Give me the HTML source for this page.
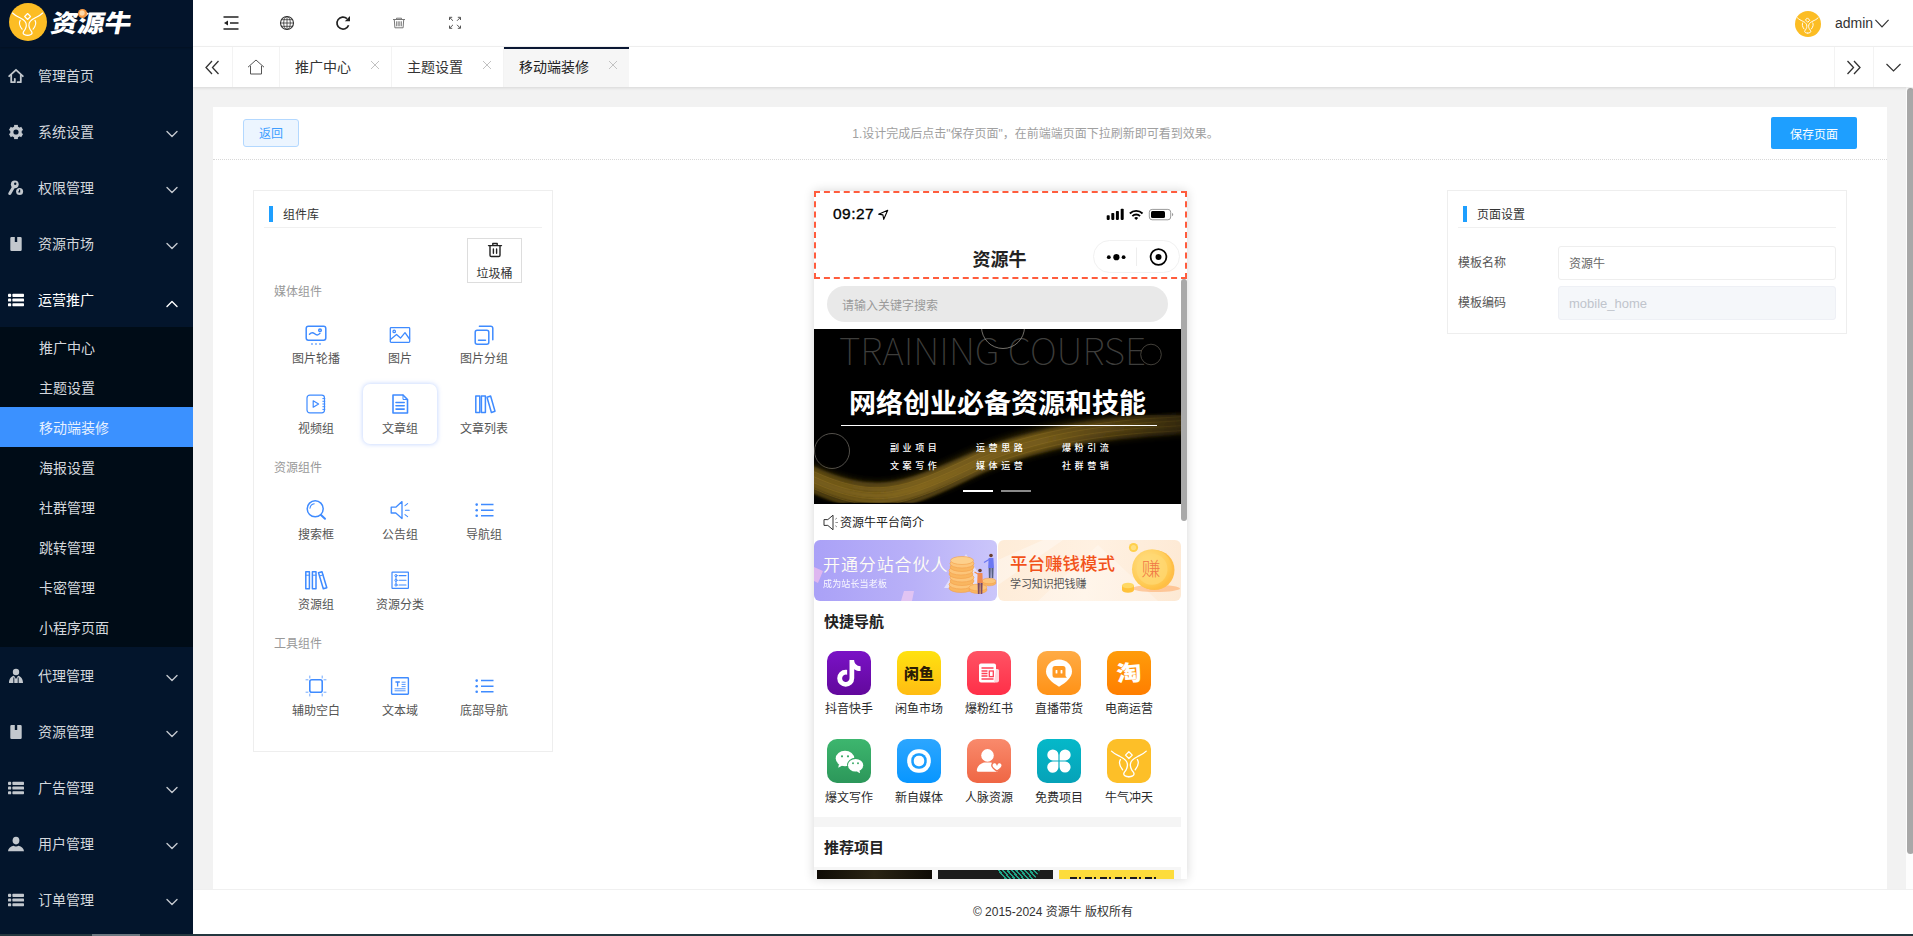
<!DOCTYPE html>
<html lang="zh-CN">
<head>
<meta charset="utf-8">
<title>资源牛 - 移动端装修</title>
<style>
*{box-sizing:border-box;margin:0;padding:0}
html,body{width:1913px;height:936px;overflow:hidden;background:#fff}
body{font-family:"Liberation Sans","Noto Sans CJK SC",sans-serif;font-size:14px;color:#333;position:relative}
.abs{position:absolute}
svg{display:block}
/* ---------- sidebar ---------- */
#side{position:absolute;left:0;top:0;width:193px;height:934px;background:#03152c;overflow:hidden}
#logo{position:absolute;left:0;top:0;width:193px;height:47px;background:#03142b;box-shadow:0 1px 2px rgba(0,0,0,.25)}
#logo .circ{position:absolute;left:9px;top:3px;width:38px;height:38px;border-radius:50%;background:#fcbd24}
#logo .name{position:absolute;left:50px;top:6px;font-size:24.500px;line-height:36px;font-weight:900;color:#fff;letter-spacing:0;white-space:nowrap;transform:skewX(-11deg) scaleX(1.090);transform-origin:0 70%;font-family:"Liberation Sans","Noto Sans CJK SC",sans-serif}
#logo .coin{position:absolute;left:78px;top:9px;width:9px;height:9px;border-radius:50%;background:radial-gradient(circle at 45% 45%,#ffd9a8 0 30%,#f79a45 45%)}
.mi{position:absolute;left:0;width:193px;height:56px;color:#d4d8dd;font-size:14px;line-height:56px}
.mi .t{position:absolute;left:38px;top:1px;white-space:nowrap}
.mi .ic{position:absolute;left:8px;top:21px;width:16px;height:16px}
.mi .ar{position:absolute;left:166px;top:27px;width:12px;height:8px}
.mi.open{color:#fff}
#sub{position:absolute;left:0;top:327px;width:193px;height:320px;background:#000c17}
.si{position:absolute;left:0;width:193px;height:40px;line-height:40px;color:#d4d8dd;font-size:14px}
.si span{position:absolute;left:39px;top:1px;white-space:nowrap}
.si.on{background:#3b91ff;color:#e6f0ff}
/* ---------- header ---------- */
#hdr{position:absolute;left:193px;top:0;width:1720px;height:47px;background:#fff;border-bottom:1px solid #f3f3f3}
#hdr .hi{position:absolute;top:14px;width:18px;height:18px}
#tabs{position:absolute;left:193px;top:47px;width:1720px;height:40px;background:#fff;box-shadow:0 1px 3px rgba(0,0,0,.12);z-index:5}
#tabs .dv{position:absolute;top:0;width:1px;height:40px;background:#f3f3f3}
#tabs .tb{position:absolute;top:0;height:40px;line-height:40px;font-size:14px;color:#333;white-space:nowrap}
#tabs .x{position:absolute;top:13px;width:10px;height:10px}
#tabs .act{position:absolute;left:311px;top:0;width:125px;height:40px;background:#f6f6f6;border-top:2px solid #0a1733}
/* ---------- body ---------- */
#main{position:absolute;left:193px;top:87px;width:1713px;height:802px;background:#f2f2f2}
#card{position:absolute;left:20px;top:21px;width:1674px;height:781px;background:#fff}
#card::before{content:"";position:absolute;left:0;top:-1px;width:100%;height:1px;background:#fff}
#vsb{position:absolute;left:1906px;top:87px;width:7px;height:802px;background:#fdfdfd}
#vsb i{position:absolute;left:1px;top:1px;width:7px;height:766px;border-radius:4px;background:#a8a8a8}
#foot{position:absolute;left:193px;top:889px;width:1720px;height:45px;background:#fff;border-top:1px solid #f0f0f0;text-align:center;font-size:12px;line-height:44px;color:#333}
#bstrip{position:absolute;left:0;top:934px;width:1913px;height:2px;background:#24373f}
#bstrip i{position:absolute;left:92px;top:0;width:48px;height:2px;background:#6b7780}

/* ---------- toolbar + panels (coords relative to #card: page x-213, y-108) ---------- */
#back{position:absolute;left:30px;top:11px;width:56px;height:28px;border:1px solid #b3d8ff;background:#ecf5ff;border-radius:3px;color:#409eff;font-size:12px;line-height:29px;text-align:center}
#tip{position:absolute;left:2.500px;top:16.700px;width:1640px;text-align:center;font-size:12px;line-height:18px;color:#a0a0a0}
#save{position:absolute;left:1558px;top:9px;width:86px;height:32px;background:#1e9fff;border-radius:2px;color:#fff;font-size:12px;line-height:36px;text-align:center}
#dot{position:absolute;left:0;top:51px;width:1674px;height:0;border-top:1px dotted #d8d8d8}
.pnl{position:absolute;border:1px solid #eee;background:#fff}
.pnl .hd{position:absolute;left:10px;top:10px;right:10px;height:27px;border-bottom:1px solid #f0f0f0}
.pnl .hd i{position:absolute;left:5px;top:5px;width:4px;height:16px;background:#1e9fff}
.pnl .hd span{position:absolute;left:19px;top:5px;font-size:12px;line-height:18px;color:#333}
.grp{position:absolute;left:20px;margin-top:.2px;font-size:12px;line-height:16px;color:#999}
.ci{position:absolute;width:76px;height:62px;text-align:center}
.ci svg{position:absolute;left:26px;top:10px;width:24px;height:24px}
.ci span{position:absolute;left:-10px;width:96px;top:39px;font-size:12px;line-height:16px;color:#555;white-space:nowrap}
.ci.sel::before{content:"";position:absolute;left:1px;top:2px;width:74px;height:60px;border-radius:7px;box-shadow:0 0 5px rgba(90,140,255,.42);background:#fff}
#trash{position:absolute;left:213px;top:47px;width:55px;height:45px;border:1px solid #ddd;text-align:center}
#trash span{position:absolute;left:0;width:53px;top:27px;font-size:12px;line-height:16px;color:#333}
.frm{position:absolute;left:10px;margin-top:.4px;font-size:12px;line-height:18px;color:#555}
.inp{position:absolute;left:110px;width:278px;height:34px;border:1px solid #eee;border-radius:3px;font-size:12px;line-height:32px;padding-left:10px;color:#666}

/* ---------- phone (origin page 814,191) ---------- */
#phone{position:absolute;left:601px;top:83px;width:373px;height:688px;background:#fff;box-shadow:0 0 10px rgba(0,0,0,.16);overflow:hidden}
#phead{position:absolute;left:0;top:0;width:373px;height:88px;border:2px dashed #ff5c3d;background:#fff}
#ptime{position:absolute;left:17px;top:11.300px;font-size:15.500px;line-height:20px;color:#000;font-weight:400;-webkit-text-stroke:.35px #000;letter-spacing:.45px}
#ptitle{position:absolute;left:-1px;top:52.500px;width:369px;text-align:center;font-size:18px;line-height:28px;font-weight:700;color:#222}
#caps{position:absolute;left:277px;top:46.500px;width:87px;height:33px;border:1px solid #f1f1f1;border-radius:17px}
#psb{position:absolute;left:367px;top:88px;width:6px;height:600px;background:#fff}
#psb i{position:absolute;left:0;top:0;width:6px;height:242px;border-radius:3px;background:#a9a9a9}
#psearch{position:absolute;left:13px;top:95px;width:341px;height:36px;border-radius:18px;background:#e9e9e9;font-size:12px;line-height:40px;color:#9a9a9a;padding-left:15px}
#pban{position:absolute;left:0;top:138px;width:367px;height:175px;background:#000;overflow:hidden}
#pban .tt{position:absolute;left:0;top:58px;width:367px;text-align:center;font-size:27px;line-height:34px;font-weight:700;color:#fff;white-space:nowrap;letter-spacing:0}
#pban .ln{position:absolute;left:27px;top:96px;width:316px;height:1px;background:#fff}
#pban .sm{position:absolute;font-size:9px;line-height:12px;color:#fff;letter-spacing:3.600px;white-space:nowrap;font-weight:500}
#pban .ind{position:absolute;top:161px;width:30px;height:2px}
#pnote{position:absolute;left:26px;top:322.500px;font-size:12px;line-height:18px;color:#222;white-space:nowrap}
.pb{position:absolute;top:349px;height:61px;border-radius:6px;overflow:hidden}
#pb1{left:0;width:183px;background:linear-gradient(90deg,#aaa1f7 0%,#b9b1f8 55%,#cbc6fa 100%)}
#pb2{left:184px;width:183px;background:linear-gradient(100deg,#feecd8 0%,#fff1e2 50%,#fde9d4 100%)}
.ph{position:absolute;left:10px;font-size:15px;line-height:20px;font-weight:700;color:#222;white-space:nowrap}
.ni{position:absolute;width:44px;height:44px;border-radius:10px;overflow:hidden}
.ni svg{position:absolute;left:0;top:0;width:44px;height:44px}
.nl{position:absolute;width:70px;text-align:center;font-size:12px;line-height:16px;color:#2a2a2a;white-space:nowrap}
#psep{position:absolute;left:0;top:626px;width:367px;height:10px;background:#f5f5f5}
#pth{position:absolute;left:0;top:676px;width:367px;height:12px;background:#f6f6f6;overflow:hidden}
#pth i{position:absolute;top:3px;height:9px;width:115px;overflow:hidden}
#pth b{position:absolute;display:block}
</style>
</head>
<body>

<!-- ================= SIDEBAR ================= -->
<div id="side">
  <div id="logo">
    <div class="circ">
      <svg width="38" height="38" viewBox="0 0 38 38" fill="none" stroke="#fff" stroke-width="1.150" stroke-linecap="round" stroke-linejoin="round"><path d="M3.500 10C6 12.500 8.500 13.500 10.900 14.700S14.500 16.500 15.800 18.100C17 19.500 17.500 21 17.300 22.600C17.100 24.500 16.800 25 16.300 26C15.800 27.200 14.900 27.900 14.400 28.900C13.800 30.200 14.300 31 15.300 31.500C16.300 32.100 17.500 32.300 18.600 32.300"/><path d="M33.700 10C31.200 12.500 28.700 13.500 26.300 14.700S22.700 16.500 21.400 18.100C20.200 19.500 19.700 21 19.900 22.600C20.100 24.500 20.400 25 20.900 26C21.400 27.200 22.300 27.900 22.800 28.900C23.400 30.200 22.900 31 21.900 31.500C20.900 32.100 19.700 32.300 18.600 32.300"/><path d="M11.200 17.400C10.200 19 10.200 22.500 13.100 26.200"/><path d="M26 17.400C27 19 27 22.500 24.100 26.200"/><path d="M18.600 10.500l2.950 3-2.950 3-2.950-3z"/></svg>
    </div>
    <div class="name">资源牛</div><div class="coin"></div>
  </div>
  <div class="mi" style="top:47px"><svg class="ic" viewBox="0 0 16 16" fill="none" stroke="#c3c8ce" stroke-width="1.800" stroke-linejoin="round" stroke-linecap="round"><path d="M1.200 8.200L8 1.800l6.800 6.400"/><path d="M3.200 7v7.200h3.600v-3.400M12.800 7v7.200H9.600"/></svg><span class="t">管理首页</span></div>
  <div class="mi" style="top:103px"><svg class="ic" viewBox="0 0 16 16" fill="none" stroke="#c3c8ce"><circle cx="8" cy="8" r="4.200" stroke-width="3.200"/><g stroke-width="3.800" stroke-linecap="butt"><path d="M8 .9v2.400" transform="rotate(0 8 8)"/><path d="M8 .9v2.400" transform="rotate(60 8 8)"/><path d="M8 .9v2.400" transform="rotate(120 8 8)"/><path d="M8 .9v2.400" transform="rotate(180 8 8)"/><path d="M8 .9v2.400" transform="rotate(240 8 8)"/><path d="M8 .9v2.400" transform="rotate(300 8 8)"/></g></svg><span class="t">系统设置</span><svg class="ar" viewBox="0 0 12 8" fill="none" stroke="#c3c8ce" stroke-width="1.4" stroke-linecap="round" stroke-linejoin="round"><path d="M1 1.500l5 5 5-5"/></svg></div>
  <div class="mi" style="top:159px"><svg class="ic" viewBox="0 0 16 16"><path d="M5.800 6.500L1.800 13.500" stroke="#c3c8ce" stroke-width="3" stroke-linecap="round"/><circle cx="6.800" cy="4.300" r="3.900" fill="#c3c8ce"/><circle cx="7.200" cy="3.700" r="1.200" fill="#03152c"/><circle cx="11.600" cy="11.600" r="4.400" fill="#03152c"/><circle cx="11.600" cy="11.600" r="3.500" fill="#c3c8ce"/><path d="M11.600 9.400v2.400h-1.300" stroke="#03152c" stroke-width="1.200" fill="none"/></svg><span class="t">权限管理</span><svg class="ar" viewBox="0 0 12 8" fill="none" stroke="#c3c8ce" stroke-width="1.4" stroke-linecap="round" stroke-linejoin="round"><path d="M1 1.500l5 5 5-5"/></svg></div>
  <div class="mi" style="top:215px"><svg class="ic" viewBox="0 0 16 16"><path fill="#c3c8ce" d="M3.500 1h3.300v5h2.400V1h3.300a1.200 1.200 0 0 1 1.200 1.200v11.600a1.200 1.200 0 0 1-1.200 1.200h-9a1.200 1.200 0 0 1-1.200-1.200V2.200A1.200 1.200 0 0 1 3.500 1z"/></svg><span class="t">资源市场</span><svg class="ar" viewBox="0 0 12 8" fill="none" stroke="#c3c8ce" stroke-width="1.4" stroke-linecap="round" stroke-linejoin="round"><path d="M1 1.500l5 5 5-5"/></svg></div>
  <div class="mi open" style="top:271px"><svg class="ic" viewBox="0 0 16 16" fill="#fff"><rect x="0" y="1.800" width="3.200" height="3.100" rx=".9"/><rect x="0" y="6.500" width="3.200" height="3.100" rx=".9"/><rect x="0" y="11.200" width="3.200" height="3.100" rx=".9"/><rect x="4.400" y="1.800" width="11.600" height="3.100" rx=".7"/><rect x="4.400" y="6.500" width="11.600" height="3.100" rx=".7"/><rect x="4.400" y="11.200" width="11.600" height="3.100" rx=".7"/></svg><span class="t">运营推广</span><svg class="ar" style="margin-top:2px" viewBox="0 0 12 8" fill="none" stroke="#fff" stroke-width="1.400" stroke-linecap="round" stroke-linejoin="round"><path d="M1 6.500l5-5 5 5"/></svg></div>
  <div class="mi" style="top:647px"><svg class="ic" viewBox="0 0 16 16" fill="#c3c8ce"><circle cx="8" cy="4" r="3.200"/><path d="M1 15c0-4 2.200-6.800 5-7.300L8 11l2-3.300c2.800.5 5 3.300 5 7.300z"/><path d="M5.800 9.500v5.500M10.200 9.500v5.500" stroke="#03152c" stroke-width=".9"/></svg><span class="t">代理管理</span><svg class="ar" viewBox="0 0 12 8" fill="none" stroke="#c3c8ce" stroke-width="1.4" stroke-linecap="round" stroke-linejoin="round"><path d="M1 1.500l5 5 5-5"/></svg></div>
  <div class="mi" style="top:703px"><svg class="ic" viewBox="0 0 16 16"><path fill="#c3c8ce" d="M3.500 1h3.300v5h2.400V1h3.300a1.200 1.200 0 0 1 1.200 1.200v11.600a1.200 1.200 0 0 1-1.200 1.200h-9a1.200 1.200 0 0 1-1.200-1.200V2.200A1.200 1.200 0 0 1 3.500 1z"/></svg><span class="t">资源管理</span><svg class="ar" viewBox="0 0 12 8" fill="none" stroke="#c3c8ce" stroke-width="1.4" stroke-linecap="round" stroke-linejoin="round"><path d="M1 1.500l5 5 5-5"/></svg></div>
  <div class="mi" style="top:759px"><svg class="ic" viewBox="0 0 16 16" fill="#c3c8ce"><rect x="0" y="1.800" width="3.200" height="3.100" rx=".9"/><rect x="0" y="6.500" width="3.200" height="3.100" rx=".9"/><rect x="0" y="11.200" width="3.200" height="3.100" rx=".9"/><rect x="4.400" y="1.800" width="11.600" height="3.100" rx=".7"/><rect x="4.400" y="6.500" width="11.600" height="3.100" rx=".7"/><rect x="4.400" y="11.200" width="11.600" height="3.100" rx=".7"/></svg><span class="t">广告管理</span><svg class="ar" viewBox="0 0 12 8" fill="none" stroke="#c3c8ce" stroke-width="1.4" stroke-linecap="round" stroke-linejoin="round"><path d="M1 1.500l5 5 5-5"/></svg></div>
  <div class="mi" style="top:815px"><svg class="ic" viewBox="0 0 16 16" fill="#c3c8ce"><ellipse cx="8" cy="4.600" rx="3.400" ry="3.800"/><path d="M0 15.200c.2-3 2.400-4.600 5.400-5.400 1.600 1 3.600 1 5.200 0 3 .8 5.200 2.400 5.400 5.400z"/></svg><span class="t">用户管理</span><svg class="ar" viewBox="0 0 12 8" fill="none" stroke="#c3c8ce" stroke-width="1.4" stroke-linecap="round" stroke-linejoin="round"><path d="M1 1.500l5 5 5-5"/></svg></div>
  <div class="mi" style="top:871px"><svg class="ic" viewBox="0 0 16 16" fill="#c3c8ce"><rect x="0" y="1.800" width="3.200" height="3.100" rx=".9"/><rect x="0" y="6.500" width="3.200" height="3.100" rx=".9"/><rect x="0" y="11.200" width="3.200" height="3.100" rx=".9"/><rect x="4.400" y="1.800" width="11.600" height="3.100" rx=".7"/><rect x="4.400" y="6.500" width="11.600" height="3.100" rx=".7"/><rect x="4.400" y="11.200" width="11.600" height="3.100" rx=".7"/></svg><span class="t">订单管理</span><svg class="ar" viewBox="0 0 12 8" fill="none" stroke="#c3c8ce" stroke-width="1.4" stroke-linecap="round" stroke-linejoin="round"><path d="M1 1.500l5 5 5-5"/></svg></div>
  <div id="sub">
    <div class="si" style="top:0px"><span>推广中心</span></div>
    <div class="si" style="top:40px"><span>主题设置</span></div>
    <div class="si on" style="top:80px"><span>移动端装修</span></div>
    <div class="si" style="top:120px"><span>海报设置</span></div>
    <div class="si" style="top:160px"><span>社群管理</span></div>
    <div class="si" style="top:200px"><span>跳转管理</span></div>
    <div class="si" style="top:240px"><span>卡密管理</span></div>
    <div class="si" style="top:280px"><span>小程序页面</span></div>
  </div>
</div>

<!-- ================= HEADER ================= -->
<div id="hdr">
  <svg class="hi" style="left:29px" viewBox="0 0 18 18" fill="none" stroke="#222" stroke-width="1.500"><path d="M1.500 3h15M8 9h8.500M1.500 15h15"/><path d="M2 9l4-2.600v5.200z" fill="#222" stroke="none"/></svg>
  <svg class="hi" style="left:85px" viewBox="0 0 18 18" fill="none" stroke="#333" stroke-width=".9"><circle cx="9" cy="9" r="6.500" stroke-width="1.100"/><ellipse cx="9" cy="9" rx="3.300" ry="6.500" stroke-width=".8"/><path d="M9 2.500v13M2.500 9h13M3.500 5.700h11M3.500 12.300h11" stroke-width=".8"/></svg>
  <svg class="hi" style="left:141px" viewBox="0 0 18 18" fill="none" stroke="#222" stroke-width="1.700"><path d="M14.600 11.200A6 6 0 1 1 13 4.600"/><path d="M16 2v5.200h-5.200z" fill="#222" stroke="none"/></svg>
  <svg class="hi" style="left:197px" viewBox="0 0 18 18" fill="none" stroke="#777" stroke-width="1"><path d="M3 5.500h12M6.500 5.200V4.200h5v1M4.300 5.800l.6 8h8.200l.6-8"/><path d="M6.600 7.300v5M8.200 7.300v5M9.800 7.300v5M11.400 7.300v5" stroke-width=".9"/></svg>
  <svg class="hi" style="left:253px" viewBox="0 0 18 18" fill="none" stroke="#555" stroke-width="1"><path d="M3.700 3.500l3.300 3.300M14.300 3.500l-3.300 3.300M3.700 14.100l3.300-3.300M14.300 14.100l-3.300-3.300"/><path d="M3.500 6V3.300h2.700M11.800 3.300h2.700V6M3.500 11.600v2.700h2.700M14.500 11.600v2.700h-2.700"/></svg>
  <div class="abs" style="left:1602px;top:11px;width:26px;height:26px;border-radius:50%;background:#fcbd24">
    <svg width="26" height="26" viewBox="0 0 38 38" fill="none" stroke="#fff" stroke-width="1.400" stroke-linecap="round" stroke-linejoin="round"><path d="M3.500 10C6 12.500 8.500 13.500 10.900 14.700S14.500 16.500 15.800 18.100C17 19.500 17.500 21 17.300 22.600C17.100 24.500 16.800 25 16.300 26C15.800 27.200 14.900 27.900 14.400 28.900C13.800 30.200 14.300 31 15.300 31.500C16.300 32.100 17.500 32.300 18.600 32.300"/><path d="M33.700 10C31.200 12.500 28.700 13.500 26.300 14.700S22.700 16.500 21.400 18.100C20.200 19.500 19.700 21 19.900 22.600C20.100 24.500 20.400 25 20.900 26C21.400 27.200 22.300 27.900 22.800 28.900C23.400 30.200 22.900 31 21.900 31.500C20.900 32.100 19.700 32.300 18.600 32.300"/><path d="M11.200 17.400C10.200 19 10.200 22.500 13.100 26.200"/><path d="M26 17.400C27 19 27 22.500 24.100 26.200"/><path d="M18.600 10.500l2.950 3-2.950 3-2.950-3z"/></svg>
  </div>
  <div class="abs" style="left:1642px;top:12.800px;font-size:14px;line-height:20px;color:#333">admin</div>
  <svg class="abs" style="left:1682px;top:18.500px" width="14" height="9" viewBox="0 0 14 9" fill="none" stroke="#333" stroke-width="1.200"><path d="M.4 .8l6.600 7L13.600 .8"/></svg>
</div>
<div id="tabs">
  <div class="act"></div>
  <svg class="abs" style="left:12px;top:13px" width="15" height="15" viewBox="0 0 15 15" fill="none" stroke="#333" stroke-width="1.300"><path d="M7 1L1 7.500 7 14M13.500 1l-6 6.500 6 6.500"/></svg>
  <div class="dv" style="left:39px"></div>
  <svg class="abs" style="left:54px;top:12px" width="18" height="16" viewBox="0 0 18 16" fill="none" stroke="#555" stroke-width="1"><path d="M1 8.200L9 1l8 7.200"/><path d="M3.500 6.800V15h11V6.800"/></svg>
  <div class="dv" style="left:86px"></div>
  <div class="tb" style="left:102px">推广中心</div><svg class="x" style="left:177px" viewBox="0 0 10 10" fill="none" stroke="#c2c2c2" stroke-width="1"><path d="M1 1l8 8M9 1l-8 8"/></svg>
  <div class="dv" style="left:198px"></div>
  <div class="tb" style="left:214px">主题设置</div><svg class="x" style="left:289px" viewBox="0 0 10 10" fill="none" stroke="#c2c2c2" stroke-width="1"><path d="M1 1l8 8M9 1l-8 8"/></svg>
  <div class="dv" style="left:310px"></div>
  <div class="tb" style="left:326px;color:#222">移动端装修</div><svg class="x" style="left:415px" viewBox="0 0 10 10" fill="none" stroke="#c2c2c2" stroke-width="1"><path d="M1 1l8 8M9 1l-8 8"/></svg>
  <div class="dv" style="left:1641px"></div>
  <svg class="abs" style="left:1653px;top:13px" width="15" height="15" viewBox="0 0 15 15" fill="none" stroke="#333" stroke-width="1.300"><path d="M1.500 1l6 6.500-6 6.500M8 1l6 6.500L8 14"/></svg>
  <div class="dv" style="left:1680px"></div>
  <svg class="abs" style="left:1693px;top:16px" width="15" height="9" viewBox="0 0 15 9" fill="none" stroke="#333" stroke-width="1.200"><path d="M.5 1l7 7 7-7"/></svg>
</div>

<!-- ================= MAIN ================= -->
<div id="main"><div id="card">
  <div id="back">返回</div>
  <div id="tip">1.设计完成后点击"保存页面"，在前端端页面下拉刷新即可看到效果。</div>
  <div id="save">保存页面</div>
  <div id="dot"></div>
  <!-- left: component library -->
  <div class="pnl" style="left:40px;top:82px;width:300px;height:562px">
    <div class="hd"><i></i><span>组件库</span></div>
    <div id="trash"><svg class="abs" style="left:17.500px;top:1.800px" width="18" height="18" viewBox="0 0 18 18" fill="none" stroke="#222" stroke-width="1.400" stroke-linecap="round" stroke-linejoin="round"><path d="M2.500 4.600h13M6.800 4.400V2.500h4.400v1.900M4 4.800v9.400a1.300 1.300 0 0 0 1.300 1.300h7.400a1.300 1.300 0 0 0 1.300-1.300V4.800M7.400 8v4.200M10.600 8v4.200"/></svg><span>垃圾桶</span></div>
    <div class="grp" style="top:93px">媒体组件</div>
    <div class="grp" style="top:269px">资源组件</div>
    <div class="grp" style="top:445px">工具组件</div>
    <div class="ci" style="left:24px;top:121px"><svg style="margin-top:.5px" viewBox="0 0 24 24" fill="none" stroke="#3f8bff" stroke-width="1.5" stroke-linecap="round" stroke-linejoin="round"><rect x="2.200" y="3.200" width="19.600" height="14" rx="2.200"/><path d="M5.500 11.200c2-2.200 3.800-1.600 5.200-.4 1.600 1.400 3.400 1.800 5.200-.4"/><circle cx="16" cy="7.200" r="1.300"/><path d="M7.300 21h1.400M11.300 21h1.400M15.300 21h1.400" stroke-width="1.500" stroke-linecap="butt"/></svg><span>图片轮播</span></div>
    <div class="ci" style="left:108px;top:121px"><svg style="margin-top:.5px" viewBox="0 0 24 24" fill="none" stroke="#3f8bff" stroke-width="1.3" stroke-linecap="round" stroke-linejoin="round"><rect x="2.300" y="4.700" width="19.400" height="14.600" rx=".8"/><circle cx="6.200" cy="8.400" r="1.200"/><path d="M2.500 16.500l6-5 4 3.600 4.500-5.400 4.500 6.300"/></svg><span>图片</span></div>
    <div class="ci" style="left:192px;top:121px"><svg style="margin-top:.5px" viewBox="0 0 24 24" fill="none" stroke="#3f8bff" stroke-width="1.5" stroke-linecap="round" stroke-linejoin="round"><rect x="3.200" y="7.200" width="13.600" height="14" rx="2"/><path d="M7.400 3.200h11.400a2 2 0 0 1 2 2v11.600"/><path d="M6.500 17.200h7"/></svg><span>图片分组</span></div>
    <div class="ci" style="left:24px;top:191px"><svg viewBox="0 0 24 24" fill="none" stroke="#3f8bff" stroke-width="1.2" stroke-linecap="round" stroke-linejoin="round"><rect x="3" y="3.200" width="17.500" height="17.600" rx="2.800"/><path d="M9.200 8.800v6.400l5.400-3.200z"/><path d="M18.800 6.600h2M18.800 9.300h2M18.800 12h2M18.800 14.700h2M18.800 17.400h2" stroke-width="1"/></svg><span>视频组</span></div>
    <div class="ci sel" style="left:108px;top:191px"><svg viewBox="0 0 24 24" fill="none" stroke="#3f8bff" stroke-width="1.6" stroke-linecap="round" stroke-linejoin="round"><path d="M5 3h10l4.500 4.500V21H5z"/><path d="M15 3v4.500h4.500" stroke-width="1"/><path d="M8 10.500h8.200M8 13.800h8.200M8 17.100h8.200"/></svg><span>文章组</span></div>
    <div class="ci" style="left:192px;top:191px"><svg viewBox="0 0 24 24" fill="none" stroke="#3f8bff" stroke-width="1.500" stroke-linecap="round" stroke-linejoin="round"><rect x="3.800" y="4" width="4" height="16.500"/><rect x="9.400" y="4" width="4" height="16.500"/><path d="M15 5.200l3.600-1.200 4.400 15.300-3.600 1.200z"/></svg><span>文章列表</span></div>
    <div class="ci" style="left:24px;top:297px"><svg viewBox="0 0 24 24" fill="none" stroke="#3f8bff" stroke-width="1.500" stroke-linecap="round" stroke-linejoin="round"><circle cx="11.200" cy="10.800" r="8"/><path d="M17 17l4 3.800" stroke-width="2"/><path d="M6 10.200c.3-2.300 2-4 4.200-4.400" stroke-width="1.100"/></svg><span>搜索框</span></div>
    <div class="ci" style="left:108px;top:297px"><svg viewBox="0 0 24 24" fill="none" stroke="#3f8bff" stroke-width="1.3" stroke-linecap="round" stroke-linejoin="round"><path d="M3.200 9.200h4.600l6.200-5.600v17l-6.200-5.600H3.200z"/><path d="M17.500 12.200h3.700M17 7.600l2.600-2M17 16.600l2.600 2" stroke-width="1.100"/></svg><span>公告组</span></div>
    <div class="ci" style="left:192px;top:297px"><svg viewBox="0 0 24 24" fill="none" stroke="#3f8bff" stroke-width="1.500" stroke-linecap="round" stroke-linejoin="round"><circle cx="4.700" cy="6.600" r="1.300" fill="#3f8bff" stroke="none"/><circle cx="4.700" cy="12.200" r="1.300" fill="#3f8bff" stroke="none"/><circle cx="4.700" cy="17.800" r="1.300" fill="#3f8bff" stroke="none"/><path d="M9 6.600h12.500M9 12.200h12.500M9 17.800h12.500" stroke-linecap="butt"/></svg><span>导航组</span></div>
    <div class="ci" style="left:24px;top:367px"><svg viewBox="0 0 24 24" fill="none" stroke="#3f8bff" stroke-width="1.500" stroke-linecap="round" stroke-linejoin="round"><rect x="1.800" y="3.800" width="3.600" height="17"/><rect x="8.400" y="3.800" width="3.600" height="17"/><path d="M14.500 4.800l3.500-1.100 4.800 16-3.500 1.100z"/><path d="M1.800 7.200h3.600M8.400 7.200h3.600M15.400 8l3.500-1.100" stroke-width="1"/></svg><span>资源组</span></div>
    <div class="ci" style="left:108px;top:367px"><svg viewBox="0 0 24 24" fill="none" stroke="#3f8bff" stroke-width="1.200" stroke-linecap="round" stroke-linejoin="round"><rect x="4" y="4.200" width="16.400" height="16.200" rx=".4"/><circle cx="8" cy="7.600" r="1.100" stroke-width="1"/><circle cx="8" cy="12.300" r="1.100" stroke-width="1"/><circle cx="8" cy="17" r="1.100" stroke-width="1"/><path d="M8 8.700v2.500M8 13.400v2.500" stroke-width="1"/><path d="M11 7.600h7M11 12.300h7M11 17h7" stroke-width="1.100"/></svg><span>资源分类</span></div>
    <div class="ci" style="left:24px;top:473px"><svg viewBox="0 0 24 24" fill="none" stroke="#3f8bff" stroke-width="1.600" stroke-linecap="round" stroke-linejoin="round"><rect x="5.800" y="5.800" width="12.400" height="12.400" rx="2"/><path d="M5.800 2v2M18.200 2v2M5.800 20v2M18.200 20v2M2 5.800h2M20 5.800h2M2 18.200h2M20 18.200h2" stroke-width="1" opacity=".75"/></svg><span>辅助空白</span></div>
    <div class="ci" style="left:108px;top:473px"><svg viewBox="0 0 24 24" fill="none" stroke="#3f8bff" stroke-width="1.400" stroke-linecap="round" stroke-linejoin="round"><rect x="3.600" y="3.800" width="16.800" height="16.400" rx=".6"/><path d="M7.400 8h4.400M9.600 8v4.600" stroke-width="1.300" stroke-linecap="butt"/><path d="M13.600 8.200h4M13.600 10.400h4M13.600 12.600h4M6.600 14.800h11M6.600 16.800h11" stroke-width=".9" stroke-linecap="butt"/></svg><span>文本域</span></div>
    <div class="ci" style="left:192px;top:473px"><svg viewBox="0 0 24 24" fill="none" stroke="#3f8bff" stroke-width="1.500" stroke-linecap="round" stroke-linejoin="round"><circle cx="4.700" cy="6.600" r="1.300" fill="#3f8bff" stroke="none"/><circle cx="4.700" cy="12.200" r="1.300" fill="#3f8bff" stroke="none"/><circle cx="4.700" cy="17.800" r="1.300" fill="#3f8bff" stroke="none"/><path d="M9 6.600h12.500M9 12.200h12.500M9 17.800h12.500" stroke-linecap="butt"/></svg><span>底部导航</span></div>
  </div>
  <!-- middle: phone -->
  <div id="phone">
    <div id="phead">
      <div id="ptime">09:27</div>
      <svg class="abs" style="left:61px;top:15.500px" width="12" height="12" viewBox="0 0 13 13" fill="none" stroke="#000" stroke-width="1.200" stroke-linejoin="round"><path d="M11.600 1.400L1.800 5.600l4.600.8.900 4.800z"/></svg>
      <svg class="abs" style="left:290px;top:14px" width="70" height="14" viewBox="0 0 70 14">
        <rect x=".7" y="8.300" width="3" height="4.600" rx=".8"/><rect x="5.300" y="6" width="3" height="6.900" rx=".8"/><rect x="9.900" y="3.900" width="3" height="9" rx=".8"/><rect x="14.700" y="1.800" width="3" height="11.100" rx=".8"/>
        <path d="M23.200 5.800a10 10 0 0 1 14 0l-1.300 1.400a8.100 8.100 0 0 0-11.400 0z"/><path d="M25.700 8.400a6.400 6.400 0 0 1 9 0l-1.300 1.400a4.500 4.500 0 0 0-6.400 0z"/><path d="M28.200 11a2.800 2.800 0 0 1 4 0l-2 2.100z"/>
        <rect x="43.300" y="2.400" width="21.400" height="10.400" rx="2.800" fill="none" stroke="#9a9a9a" stroke-width="1"/><rect x="45" y="4.100" width="14" height="7" rx="1.500"/><path d="M66 6v3.200c.9-.3 1.200-.9 1.200-1.600S66.900 6.300 66 6z" fill="#9a9a9a"/>
      </svg>
      <div id="ptitle">资源牛</div>
      <div id="caps">
        <svg class="abs" style="left:0;top:0" width="85" height="31" viewBox="0 0 85 31"><circle cx="14.800" cy="16.200" r="1.900"/><circle cx="22.400" cy="16.200" r="3.100"/><circle cx="29.600" cy="16.200" r="1.900"/><path d="M42.500 6.500v18.500" stroke="#eee" stroke-width="1"/><circle cx="64.500" cy="16" r="7.900" fill="none" stroke="#000" stroke-width="1.800"/><circle cx="64.500" cy="16" r="3"/></svg>
      </div>
    </div>
    <div id="psb"><i></i></div>
    <div id="psearch">请输入关键字搜索</div>
    <!-- carousel banner -->
    <div id="pban">
      <svg class="abs" style="left:0;top:0" width="367" height="174" viewBox="0 0 367 174">
        <defs>
          <linearGradient id="gd" x1="0" y1="0" x2="1" y2="0"><stop offset="0" stop-color="#7a601c"/><stop offset=".3" stop-color="#8a6c20"/><stop offset=".62" stop-color="#7a5f1c"/><stop offset=".85" stop-color="#5c4716" stop-opacity=".8"/><stop offset="1" stop-color="#4a3a12" stop-opacity=".55"/></linearGradient>
          <linearGradient id="fd" x1="0" y1="0" x2="1" y2="0"><stop offset="0" stop-color="#fff"/><stop offset=".6" stop-color="#fff"/><stop offset="1" stop-color="#555"/></linearGradient><mask id="mk"><rect x="-10" y="-10" width="390" height="200" fill="url(#fd)"/></mask>
          <filter id="bl" x="-10%" y="-30%" width="120%" height="160%"><feGaussianBlur stdDeviation="1.300"/></filter>
          <filter id="bl2" x="-10%" y="-30%" width="120%" height="160%"><feGaussianBlur stdDeviation="3.500"/></filter>
        </defs>
        <text x="25" y="35.500" font-family="Noto Sans CJK SC,Liberation Sans,sans-serif" font-size="37" fill="#3e3e3c" textLength="307" lengthAdjust="spacingAndGlyphs" font-weight="100">TRAINING COURSE</text>
        <circle cx="189" cy="-2" r="21.500" fill="none" stroke="#8f8b84" stroke-width=".8"/>
        <circle cx="337" cy="25.500" r="10.300" fill="none" stroke="#5e5a52" stroke-width=".7"/>
        <circle cx="18" cy="122" r="17.500" fill="none" stroke="#77736b" stroke-width=".7"/>
        <g filter="url(#bl2)" opacity=".8" mask="url(#mk)"><path d="M-8 146C25 162 50 168 75 165S130 148 160 134S240 106 290 100S340 96 375 93" fill="none" stroke="#4e3c10" stroke-width="24"/></g>
        <g filter="url(#bl)" fill="none" stroke="url(#gd)" stroke-linecap="round">
          <path d="M-8 136C25 152 50 158 75 155S130 138 160 125S240 98 290 92S340 88 375 85" stroke-width="4" opacity=".5"/>
          <path d="M-8 141C25 157 50 163 75 160S130 143 160 129S240 102 290 96S340 92 375 89" stroke-width="5" opacity=".8"/>
          <path d="M-8 147C25 163 50 169 75 166S130 149 160 135S240 107 290 101S340 97 375 94" stroke-width="6" opacity=".9"/>
          <path d="M-8 153C25 169 50 175 75 172S130 155 160 141S240 112 290 106S340 102 375 99" stroke-width="5" opacity=".75"/>
          <path d="M-8 159C25 175 50 181 75 178S130 161 160 146S240 116 290 110S340 106 375 103" stroke-width="4" opacity=".5"/>
        </g>
        <g fill="none" stroke="#a8842a" stroke-width=".5" opacity=".5" mask="url(#mk)">
          <path d="M-8 139C25 155 50 161 75 158S130 141 160 127S240 100 290 94S340 90 375 87"/>
          <path d="M-8 144C25 160 50 166 75 163S130 146 160 132S240 104 290 98S340 94 375 91"/>
          <path d="M-8 150C25 166 50 172 75 169S130 152 160 138S240 109 290 103S340 99 375 96"/>
          <path d="M-8 156C25 172 50 178 75 175S130 158 160 143S240 114 290 108S340 104 375 101"/>
        </g>
      </svg>
      <div class="tt">网络创业必备资源和技能</div>
      <div class="ln"></div>
      <div class="sm" style="left:76px;top:112.700px">副业项目</div>
      <div class="sm" style="left:162px;top:112.700px">运营思路</div>
      <div class="sm" style="left:248px;top:112.700px">爆粉引流</div>
      <div class="sm" style="left:76px;top:130.700px">文案写作</div>
      <div class="sm" style="left:162px;top:130.700px">媒体运营</div>
      <div class="sm" style="left:248px;top:130.700px">社群营销</div>
      <div class="ind" style="left:149px;background:#fff"></div>
      <div class="ind" style="left:187px;background:#8a8a8a"></div>
    </div>
    <!-- notice -->
    <svg class="abs" style="left:9px;top:322.500px" width="17" height="17" viewBox="0 0 17 17" fill="none" stroke="#333" stroke-width="1" stroke-linejoin="round"><path d="M1 5.600h3.800L10 1.200v14.600l-5.200-4.400H1z"/><path d="M12.400 8.500h2.600M12.200 5.400l1.800-1.400M12.200 11.600l1.800 1.400" stroke="#888" stroke-width=".9"/></svg>
    <div id="pnote">资源牛平台简介</div>
    <!-- promo banners -->
    <div class="pb" id="pb1">
      <svg class="abs" style="left:0;top:0" width="183" height="61" viewBox="0 0 183 61">
        <path d="M0 27l9 4-5 12-4-2z" fill="#e3b8ee" opacity=".9"/><path d="M90 51h10l-2 10H87z" fill="#e6c6f2" opacity=".9"/>
        <path d="M152 14l22 34h-44z" fill="#e9e9ff" opacity=".8"/>
        <g stroke="#f3a04a" stroke-width=".6" transform="translate(1 2)">
          <ellipse cx="146" cy="46" rx="12" ry="4.500" fill="#f9b660"/><ellipse cx="146" cy="42.500" rx="12" ry="4.500" fill="#fcc57a"/>
          <ellipse cx="147" cy="39" rx="12" ry="4.500" fill="#f9b660"/><ellipse cx="147" cy="35.500" rx="12" ry="4.500" fill="#fcc57a"/>
          <ellipse cx="146" cy="32" rx="12" ry="4.500" fill="#f9b660"/><ellipse cx="146" cy="28.500" rx="12" ry="4.500" fill="#fcc57a"/>
          <ellipse cx="147" cy="25" rx="12" ry="4.500" fill="#f9b660"/><ellipse cx="147" cy="21.500" rx="12" ry="4.500" fill="#fcc57a"/>
          <ellipse cx="147" cy="18.500" rx="11.500" ry="4" fill="#fdd08c"/>
          <ellipse cx="163" cy="48" rx="9" ry="3.400" fill="#f9b660"/><ellipse cx="163" cy="45.500" rx="9" ry="3.400" fill="#fcc57a"/>
          <ellipse cx="174" cy="41" rx="7" ry="2.800" fill="#f9b660"/><ellipse cx="174" cy="39" rx="7" ry="2.800" fill="#fcc57a"/>
        </g>
        <circle cx="166" cy="30.500" r="1.800" fill="#6a4030"/><path d="M163.600 33h4.800l.4 10h-5.600z" fill="#f08a50"/><path d="M163.600 43h2.200l-.3 11h-1.600zM166.400 43h2.200l-.3 11h-1.600z" fill="#7a4a66"/><path d="M164 34l-3.500-2" stroke="#f08a50" stroke-width="1.200"/>
        <circle cx="177" cy="15.500" r="1.800" fill="#6a4030"/><path d="M174.600 18h4.800l.6 10h-5.800z" fill="#6b77f2"/><path d="M174.600 28h2.200l-.3 10h-1.600zM177.400 28h2.200l-.3 10h-1.600z" fill="#56607e"/><path d="M175 19.500l-5 3" stroke="#6b77f2" stroke-width="1.200"/>
      </svg>
      <div class="abs" style="left:9px;top:14px;font-size:17px;line-height:24px;color:#fffdf4;font-weight:350;letter-spacing:.9px;white-space:nowrap">开通分站合伙人</div>
      <div class="abs" style="left:9px;top:36.500px;font-size:9px;line-height:14px;color:#fff;opacity:.92;white-space:nowrap;letter-spacing:.15px">成为站长当老板</div>
    </div>
    <div class="pb" id="pb2">
      <svg class="abs" style="left:0;top:0" width="183" height="61" viewBox="0 0 183 61">
        <defs><radialGradient id="cg" cx=".4" cy=".35" r=".75"><stop offset="0" stop-color="#ffe08a"/><stop offset=".7" stop-color="#ffcb55"/><stop offset="1" stop-color="#ffb93a"/></radialGradient></defs>
        <path d="M0 20L45 0h20L0 45z" fill="#fff" opacity=".35"/><path d="M40 61L100 5l60 56z" fill="#fff" opacity=".28"/>
        <ellipse cx="158" cy="48.500" rx="24" ry="3.500" fill="#ff9a4a" opacity=".45"/>
        <circle cx="135.500" cy="7.500" r="4.600" fill="#ffd04c"/><circle cx="135.500" cy="7.500" r="2.600" fill="#ffdf80"/>
        <ellipse cx="130" cy="50" rx="6" ry="2.800" fill="#ffc23a"/><rect x="124" y="45.500" width="12" height="4.500" fill="#ffc23a"/><ellipse cx="130" cy="45.500" rx="6" ry="2.800" fill="#ffd864"/>
        <circle cx="156.500" cy="30" r="20" fill="#ffbe48"/><circle cx="154" cy="29.200" r="20" fill="url(#cg)"/><circle cx="154" cy="29.200" r="15.500" fill="#ffd974" opacity=".7"/>
      </svg>
      <div class="abs" style="left:12px;top:12px;font-size:17.500px;line-height:24px;color:#f2521a;font-weight:500;white-space:nowrap;letter-spacing:0">平台赚钱模式</div>
      <div class="abs" style="left:12px;top:36px;font-size:11px;line-height:16px;color:#555;white-space:nowrap;letter-spacing:-.1px">学习知识把钱赚</div>
      <div class="abs" style="left:142px;top:17.500px;font-size:19px;line-height:24px;color:#f07846;font-weight:300;width:22px;text-align:center">赚</div>
    </div>
    <div class="ph" style="top:421px">快捷导航</div>
    <div class="ni" style="left:13px;top:460px;background:linear-gradient(180deg,#7a12c6,#62089c)"><svg viewBox="0 0 44 44"><path transform="translate(10 9) scale(1.090) translate(-10 -9)" fill="#fff" d="M21.500 9h4.200c.2 3.200 2.200 5.400 5.900 5.800v4.300c-2.300 0-4.300-.6-5.800-1.700v8.400a7.800 7.800 0 1 1-7.800-7.800c.5 0 .9 0 1.300.1v4.500a3.400 3.400 0 1 0 2.200 3.200z"/></svg></div>
    <div class="nl" style="left:0px;top:510px">抖音快手</div>
    <div class="ni" style="left:83px;top:460px;background:linear-gradient(180deg,#ffe210,#ffbc12)"><svg viewBox="0 0 44 44"><text x="22" y="28" text-anchor="middle" font-size="15" font-weight="900" fill="#2b1d05" font-family="Liberation Sans,Noto Sans CJK SC,sans-serif" textLength="30" lengthAdjust="spacingAndGlyphs">闲鱼</text></svg></div>
    <div class="nl" style="left:70px;top:510px">闲鱼市场</div>
    <div class="ni" style="left:153px;top:460px;background:linear-gradient(180deg,#ff5364,#ff2f48)"><svg viewBox="0 0 44 44"><rect x="12" y="12.500" width="17" height="19" rx="2" fill="#fff"/><path d="M29 18h1.500a1.500 1.500 0 0 1 1.500 1.500v10a2 2 0 0 1-2 2H27" fill="#ffd5da"/><path d="M14.500 17h12M14.500 20h6M14.500 22.500h6M14.500 25h6M14.500 28h12" stroke="#ff4055" stroke-width="1.300"/><rect x="22.300" y="20" width="4" height="5.600" fill="none" stroke="#ff4055" stroke-width="1.300"/></svg></div>
    <div class="nl" style="left:140px;top:510px">爆粉红书</div>
    <div class="ni" style="left:223px;top:460px;background:linear-gradient(180deg,#ffab45,#ff9216)"><svg viewBox="0 0 44 44"><path fill="#fff" d="M22 8.500c7.200 0 13 5.300 13 12 0 6-6 11-13 15.200C15 31.500 9 26.500 9 20.500c0-6.700 5.800-12 13-12z"/><path fill="#ff9a24" d="M18 15h8a2.500 2.500 0 0 1 2.500 2.500v7.500l1.400 1.800H18a2.500 2.500 0 0 1-2.500-2.500v-6.800A2.500 2.500 0 0 1 18 15z"/><rect x="18.600" y="19" width="1.800" height="3.600" rx=".5" fill="#fff"/><rect x="23.600" y="19" width="1.800" height="3.600" rx=".5" fill="#fff"/></svg></div>
    <div class="nl" style="left:210px;top:510px">直播带货</div>
    <div class="ni" style="left:293px;top:460px;background:linear-gradient(180deg,#ff9c0a,#ff7e00)"><svg viewBox="0 0 44 44"><text x="22" y="30" text-anchor="middle" font-size="22" font-weight="900" fill="#fff" font-family="Liberation Sans,Noto Sans CJK SC,sans-serif" textLength="25" lengthAdjust="spacingAndGlyphs" transform="rotate(-4 22 22)">淘</text></svg></div>
    <div class="nl" style="left:280px;top:510px">电商运营</div>
    <div class="ni" style="left:13px;top:548px;background:linear-gradient(180deg,#3db66e,#2c975a)"><svg viewBox="0 0 44 44"><ellipse cx="18" cy="19.500" rx="9.300" ry="7.800" fill="#fff"/><path d="M12 25l-.8 3.800 4.200-2.200z" fill="#fff"/><ellipse cx="28.600" cy="26" rx="8.600" ry="7.200" fill="#35a864"/><ellipse cx="28.600" cy="26.300" rx="7.600" ry="6.300" fill="#fff"/><path d="M32.500 31.500l.6 2.800-3.400-1.700z" fill="#fff"/><circle cx="15" cy="17.300" r="1.100" fill="#35a864"/><circle cx="21" cy="17.300" r="1.100" fill="#35a864"/><circle cx="26" cy="24.300" r=".95" fill="#35a864"/><circle cx="31" cy="24.300" r=".95" fill="#35a864"/></svg></div>
    <div class="nl" style="left:0px;top:598.500px">爆文写作</div>
    <div class="ni" style="left:83px;top:548px;background:linear-gradient(180deg,#2ca6ff,#0896ff)"><svg viewBox="0 0 44 44"><rect x="10.200" y="10.200" width="23.600" height="23.600" rx="11" fill="#fff"/><rect x="14.300" y="14.300" width="15.400" height="15.400" rx="7" fill="#1a9eff"/><rect x="16.800" y="16.800" width="10.400" height="10.400" rx="4.600" fill="#fff"/></svg></div>
    <div class="nl" style="left:70px;top:598.500px">新自媒体</div>
    <div class="ni" style="left:153px;top:548px;background:linear-gradient(180deg,#f98a6c,#ef6644)"><svg viewBox="0 0 44 44"><circle cx="20.500" cy="16.400" r="6.300" fill="#fff"/><path d="M9.800 31.500c.3-4.600 4-7.200 7.300-8h6.800c3.300.8 7 3.400 7.300 8 0 .8-.6 1.200-1.400 1.200H11.200c-.8 0-1.400-.4-1.400-1.200z" fill="#fff"/><path d="M30 32.200c-3-2-5.200-3.800-5.200-6a2.700 2.700 0 0 1 5.200-1 2.700 2.700 0 0 1 5.200 1c0 2.200-2.200 4-5.200 6z" fill="#fff" stroke="#f27453" stroke-width="1.400"/></svg></div>
    <div class="nl" style="left:140px;top:598.500px">人脉资源</div>
    <div class="ni" style="left:223px;top:548px;background:linear-gradient(180deg,#05b8c9,#06a2b8)"><svg viewBox="0 0 44 44"><path fill="#fff" d="M15.800 10.400a5.600 5.600 0 0 1 5.600 5.600v5.400H15.800a5.500 5.500 0 0 1 0-11zM28.200 10.400a5.500 5.500 0 0 1 0 11h-5.600V16a5.600 5.600 0 0 1 5.600-5.600zM15.800 22.600h5.600V28a5.600 5.600 0 1 1-5.600-5.400zM22.600 22.600h5.600a5.500 5.500 0 1 1-5.600 5.400z"/></svg></div>
    <div class="nl" style="left:210px;top:598.500px">免费项目</div>
    <div class="ni" style="left:293px;top:548px;background:#fdbf28"><svg viewBox="0 0 44 44"><g transform="translate(.5 .6) scale(1.150)" fill="none" stroke="#fff" stroke-width="1.150" stroke-linecap="round" stroke-linejoin="round"><path d="M3.500 10C6 12.500 8.500 13.500 10.900 14.700S14.500 16.500 15.800 18.100C17 19.500 17.500 21 17.300 22.600C17.100 24.500 16.800 25 16.300 26C15.800 27.200 14.900 27.900 14.400 28.900C13.800 30.200 14.300 31 15.300 31.500C16.300 32.100 17.500 32.300 18.600 32.300"/><path d="M33.700 10C31.200 12.500 28.700 13.500 26.300 14.700S22.700 16.500 21.400 18.100C20.200 19.500 19.700 21 19.900 22.600C20.100 24.500 20.400 25 20.900 26C21.400 27.200 22.300 27.900 22.800 28.900C23.400 30.200 22.900 31 21.900 31.500C20.900 32.100 19.700 32.300 18.600 32.300"/><path d="M11.200 17.400C10.200 19 10.200 22.500 13.100 26.200"/><path d="M26 17.400C27 19 27 22.500 24.100 26.200"/><path d="M18.600 10.500l2.950 3-2.950 3-2.950-3z"/></g></svg></div>
    <div class="nl" style="left:280px;top:598.500px">牛气冲天</div>
    <div id="psep"></div>
    <div class="ph" style="top:647px">推荐项目</div>
    <div id="pth"><i style="left:3px;background:linear-gradient(90deg,#0e0b05,#2a2414 50%,#0e0b05)"></i><i style="left:124px;background:#1c1c1c"><b style="left:58px;top:0;width:44px;height:9px;background:repeating-linear-gradient(50deg,#1fa386 0 1.600px,#1c1c1c 1.600px 3.400px);clip-path:polygon(0 0,100% 0,88% 100%,16% 100%)"></b></i><i style="left:245px;background:#fddc3c"><b style="left:11px;top:7px;width:90px;height:2px;background:repeating-linear-gradient(90deg,#1a1a1a 0 7px,#fddc3c 7px 9px,#1a1a1a 9px 11px,#fddc3c 11px 15px)"></b></i></div>
  </div>
  <!-- right: page settings -->
  <div class="pnl" style="left:1234px;top:82px;width:400px;height:144px">
    <div class="hd"><i></i><span>页面设置</span></div>
    <div class="frm" style="top:63px">模板名称</div>
    <div class="inp" style="top:55px;line-height:35px">资源牛</div>
    <div class="frm" style="top:103px">模板编码</div>
    <div class="inp" style="top:95px;background:#f5f7fa;border-color:#eef0f5;color:#c0c4cc;font-size:13px;line-height:34px">mobile_home</div>
  </div>
</div></div>
<div id="vsb"><i></i></div>
<div id="foot">© 2015-2024 资源牛 版权所有</div>
<div id="bstrip"><i></i></div>

</body>
</html>
